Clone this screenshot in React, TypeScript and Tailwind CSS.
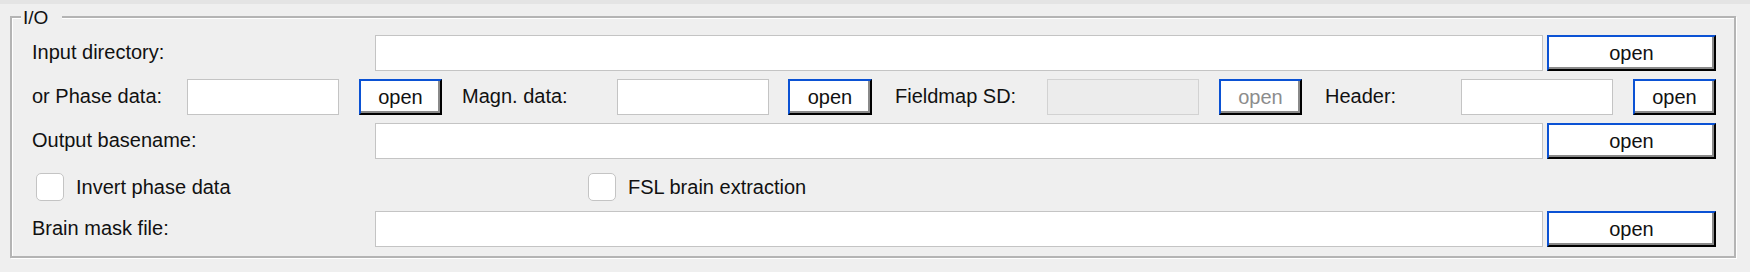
import React from 'react';

const font = { fontFamily: '"Liberation Sans", Arial, sans-serif' };

function OpenButton({ className = '', disabled = false }: { className?: string; disabled?: boolean }) {
  return (
    <button
      type="button"
      disabled={disabled}
      className={`h-[36px] shrink-0 border-2 border-t-[#0b52d4] border-l-[#0b52d4] border-r-black border-b-black bg-white text-[20px] leading-[20px] shadow-[inset_-2px_-2px_0_#8a8a8a] ${
        disabled ? 'text-[#8c8c8c]' : 'text-[#111]'
      } ${className}`}
    >
      open
    </button>
  );
}

function Field({ className = '', disabled = false }: { className?: string; disabled?: boolean }) {
  return (
    <input
      type="text"
      disabled={disabled}
      className={`h-[36px] shrink-0 border outline-none ${
        disabled ? 'border-[#d2d2d2] bg-[#ececec]' : 'border-[#c4c4c4] bg-white'
      } ${className}`}
    />
  );
}

function Label({ children, className = '' }: { children: React.ReactNode; className?: string }) {
  return <span className={`shrink-0 pb-[2px] text-[20px] leading-[20px] text-[#111] ${className}`}>{children}</span>;
}

function FileRow({ label }: { label: string }) {
  return (
    <div className="flex h-[36px] items-center">
      <Label className="w-[343px]">{label}</Label>
      <Field className="min-w-0 flex-1" />
      <OpenButton className="ml-[4px] w-[169px]" />
    </div>
  );
}

function Check({ label, className = '' }: { label: string; className?: string }) {
  return (
    <label className={`flex items-center gap-[12px] ${className}`}>
      <span className="h-[28px] w-[28px] rounded-[5px] border border-[#c4c4c4] bg-white" />
      <span className="text-[20px] leading-[20px] text-[#111]">{label}</span>
    </label>
  );
}

export default function App() {
  return (
    <div className="h-[272px] w-[1750px] overflow-hidden bg-[#efefef]" style={font}>
      <div className="h-[4px] bg-[#e4e4e4]" />
      <div className="relative ml-[10px] mt-[12px] h-[242px] w-[1726px] border-2 border-[#b4b4b4] pl-[20px] pr-[18px] pt-[17px] shadow-[1px_1px_0_#fff,inset_1px_1px_0_#fff]">
        <span className="absolute left-[9px] top-[-10px] w-[41px] bg-[#efefef] pl-[2px] text-[19px] leading-[19px] text-[#111]">
          I/O
        </span>

        <div className="flex flex-col gap-[8px]">
          <FileRow label="Input directory:" />

          <div className="flex h-[36px] items-center">
            <Label className="w-[155px]">or Phase data:</Label>
            <Field className="w-[152px]" />
            <OpenButton className="ml-[20px] w-[83px]" />

            <Label className="ml-[20px] w-[155px]">Magn. data:</Label>
            <Field className="w-[152px]" />
            <OpenButton className="ml-[19px] w-[84px]" />

            <Label className="ml-[23px] w-[152px]">Fieldmap SD:</Label>
            <Field className="w-[152px]" disabled />
            <OpenButton className="ml-[20px] w-[83px]" disabled />

            <Label className="ml-[23px] w-[136px]">Header:</Label>
            <Field className="w-[152px]" />
            <OpenButton className="ml-[20px] w-[83px]" />
          </div>

          <FileRow label="Output basename:" />
        </div>

        <div className="flex h-[52px] items-center pt-[3px]">
          <Check label="Invert phase data" className="ml-[4px] w-[552px]" />
          <Check label="FSL brain extraction" />
        </div>

        <FileRow label="Brain mask file:" />
      </div>
    </div>
  );
}
